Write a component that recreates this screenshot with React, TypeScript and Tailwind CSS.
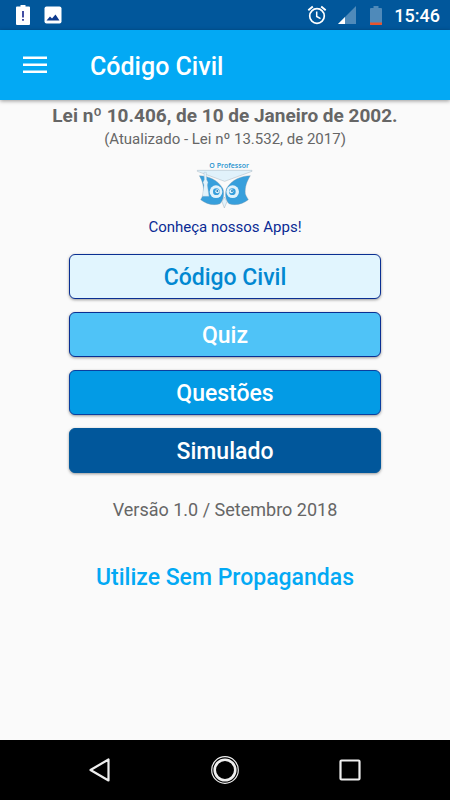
const menuItems = [
  {
    label: "Código Civil",
    style: "border-[#0a2f92] bg-[#e1f5fe] text-[#0288d1]",
  },
  {
    label: "Quiz",
    style: "border-[#0a2f92] bg-[#4fc3f7] text-white",
  },
  {
    label: "Questões",
    style: "border-[#0a3f9f] bg-[#039be5] text-white",
  },
  {
    label: "Simulado",
    style: "border-[#01579b] bg-[#01579b] text-white",
  },
];

function StatusBar() {
  return (
    <div className="flex h-[30px] items-center bg-[#01579b] pl-4 pr-2.5 text-white">
      <svg viewBox="0 0 14 20" className="h-5 w-3.5" aria-hidden="true">
        <path d="M4.5 0h5v1.5H13a1 1 0 0 1 1 1V19a1 1 0 0 1-1 1H1a1 1 0 0 1-1-1V2.500a1 1 0 0 1 1-1h3.500z" fill="#fff" />
        <path d="M6.200 6h1.600v6.500H6.200zM6.200 14h1.600v1.800H6.200z" fill="#13218c" />
      </svg>
      <svg viewBox="0 0 18 18" className="ml-3.5 h-[18px] w-[18px]" aria-hidden="true">
        <rect x="0.500" y="0.500" width="17" height="17" rx="2" fill="#fff" />
        <path d="M2.500 14.500 6 10.500l2 2 3.500-4 4 6z" fill="#0d3a8e" />
      </svg>
      <div className="ml-auto flex items-center">
        <svg viewBox="0 0 20 20" className="h-5 w-5" fill="none" stroke="#fff" aria-hidden="true">
          <circle cx="10" cy="11" r="7.300" strokeWidth="1.700" />
          <path d="M1.300 5.200 5.800 1.500M18.700 5.200 14.200 1.500" strokeWidth="1.900" />
          <path d="M9.700 6.500v5l3.800 2.200" strokeWidth="1.500" />
        </svg>
        <svg viewBox="0 0 18 18" className="ml-[11px] h-[18px] w-[18px]" aria-hidden="true">
          <path d="M0 18 18 0v18z" fill="#4f8aba" />
          <path d="M0 18 7 11v7z" fill="#fff" />
        </svg>
        <svg viewBox="0 0 12 19" className="ml-3.5 h-[19px] w-3" aria-hidden="true">
          <path d="M3.500 0h5v2H11a1 1 0 0 1 1 1v16H0V3a1 1 0 0 1 1-1h2.500z" fill="#4f8aba" />
          <path d="M0 16.500h12V18a1 1 0 0 1-1 1H1a1 1 0 0 1-1-1z" fill="#e8542c" />
        </svg>
        <span className="ml-3 pt-0.5 text-[18px] font-medium leading-6">15:46</span>
      </div>
    </div>
  );
}

function OwlLogo() {
  return (
    <svg viewBox="15 15 180 150" className="h-[50px] w-[60px]" role="img" aria-label="O Professor">
      <text
        x="58"
        y="39"
        fill="#1f93cf"
        fontSize="21"
        fontWeight="600"
        className="font-['Open_Sans',sans-serif]"
      >
        O Professor
      </text>
      <g stroke="#8494a3" strokeWidth="1" strokeLinejoin="round">
        <path d="M28 62C52 62 84 74 98 100 104 114 101 136 90 146 72 153 48 147 32 134 36 126 39 121 40 116 42 96 38 78 28 62z" fill="#379fdc" />
        <path d="M181 62C156 62 124 74 110 100 104 114 106 136 117 146 135 153 159 147 175 134 171 126 167 121 166 116 164 96 171 78 181 62z" fill="#379fdc" />
        <path d="M22 46H186L186 49 104 79 22 49z" fill="#e1f2fb" />
        <path d="M103 126 111 140 103 159 96 140z" fill="#e1f2fb" />
      </g>
      <circle cx="78" cy="110" r="19" fill="#e1f2fb" />
      <circle cx="128" cy="110" r="19" fill="#e1f2fb" />
      <circle cx="79" cy="110" r="10" fill="#379fdc" />
      <circle cx="127" cy="110" r="10" fill="#379fdc" />
      <circle cx="82" cy="109" r="6" fill="#e1f2fb" />
      <circle cx="124" cy="109" r="6" fill="#e1f2fb" />
      <circle cx="82" cy="108" r="3" fill="#2b7fb5" />
      <circle cx="126" cy="108" r="3" fill="#2b7fb5" />
      <path d="M42 52h7l1 22 4 8-2 8 5 34H37l5-34-3-8 4-8z" fill="#e1f2fb" stroke="#9fb4c4" strokeWidth="1" />
    </svg>
  );
}

function NavigationBar() {
  return (
    <nav className="grid h-[60px] grid-cols-[1fr_50px_1fr] items-center bg-black">
      <button type="button" aria-label="Voltar" className="mr-[88px] justify-self-end">
        <svg viewBox="0 0 24 26" className="h-[26px] w-6" fill="none">
          <path d="M20.500 2.500v21L2.500 13z" stroke="#eee" strokeWidth="2.200" strokeLinejoin="round" />
        </svg>
      </button>
      <button type="button" aria-label="Início" className="justify-self-center">
        <svg viewBox="0 0 30 30" className="h-[30px] w-[30px]" fill="none" stroke="#eee">
          <circle cx="15" cy="15" r="13.300" strokeWidth="1.200" />
          <circle cx="15" cy="15" r="10.300" strokeWidth="2.600" />
        </svg>
      </button>
      <button type="button" aria-label="Aplicativos recentes" className="ml-[88px] justify-self-start">
        <svg viewBox="0 0 24 24" className="h-6 w-6" fill="none">
          <rect x="2.500" y="2.500" width="19" height="19" rx="1" stroke="#eee" strokeWidth="2.200" />
        </svg>
      </button>
    </nav>
  );
}

export default function App() {
  return (
    <div className="flex min-h-screen flex-col bg-[#fafafa] font-[Roboto,sans-serif]">
      <StatusBar />

      <header className="flex h-[70px] items-center bg-[#03a9f4] px-[23px] shadow-[0_1px_4px_rgba(0,0,0,0.4)]">
        <button type="button" aria-label="Menu">
          <svg viewBox="0 0 24 18" className="h-[18px] w-6" fill="#fff">
            <path d="M0 0.500h24v2.500H0zM0 7.500h24v2.500H0zM0 14.500h24V17H0z" />
          </svg>
        </button>
        <h1 className="ml-[43px] pt-1 text-[25px] font-medium leading-8 text-white">
          Código Civil
        </h1>
      </header>

      <main className="flex flex-1 flex-col items-center pt-1 text-center text-[#666]">
        <h2 className="text-[19px] font-bold leading-6">
          Lei nº 10.406, de 10 de Janeiro de 2002.
        </h2>
        <p className="text-[15px] leading-[22px]">
          (Atualizado - Lei nº 13.532, de 2017)
        </p>

        <a href="#apps" className="mt-2.5 flex flex-col items-center text-[#0a2a94]">
          <OwlLogo />
          <span className="mt-[7px] text-[15px] leading-5">
            Conheça nossos Apps!
          </span>
        </a>

        <div className="mt-[17px] flex w-full flex-col gap-[13px] px-[69px]">
          {menuItems.map((item) => (
            <button
              key={item.label}
              type="button"
              className={`h-[45px] rounded-md border pt-1 text-[23px] font-medium shadow-[0_1px_3px_rgba(0,0,0,0.4)] ${item.style}`}
            >
              {item.label}
            </button>
          ))}
        </div>

        <p className="mt-[25px] text-[18px] leading-6">
          Versão 1.0 / Setembro 2018
        </p>
        <a href="#premium" className="mt-10 text-[23px] font-medium leading-8 text-[#03a9f4]">
          Utilize Sem Propagandas
        </a>
      </main>

      <NavigationBar />
    </div>
  );
}
